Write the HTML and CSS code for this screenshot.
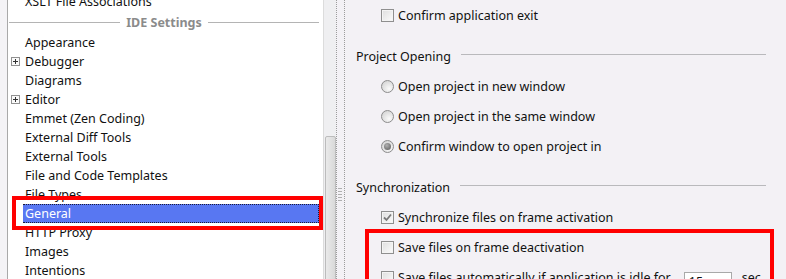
FILE: index.html
```html
<!DOCTYPE html>
<html lang="en">
<head>
    <meta charset="UTF-8">
    <title>Settings</title>
    <link rel="stylesheet" href="styles.css">
</head>
<body>

<div class="window">
    <div class="gutter"></div>

    <div class="tree">
        <div class="row cut"><span class="toggle"></span><span class="label">XSLT File Associations</span></div>
        <div class="group"><span class="group-title">IDE Settings</span></div>
        <div class="row"><span class="toggle"></span><span class="label">Appearance</span></div>
        <div class="row"><span class="toggle plus"></span><span class="label">Debugger</span></div>
        <div class="row"><span class="toggle"></span><span class="label">Diagrams</span></div>
        <div class="row"><span class="toggle plus"></span><span class="label">Editor</span></div>
        <div class="row"><span class="toggle"></span><span class="label">Emmet (Zen Coding)</span></div>
        <div class="row"><span class="toggle"></span><span class="label">External Diff Tools</span></div>
        <div class="row"><span class="toggle"></span><span class="label">External Tools</span></div>
        <div class="row"><span class="toggle"></span><span class="label">File and Code Templates</span></div>
        <div class="row"><span class="toggle"></span><span class="label">File Types</span></div>
        <div class="row selected"><span class="toggle"></span><span class="label">General</span></div>
        <div class="row"><span class="toggle"></span><span class="label">HTTP Proxy</span></div>
        <div class="row"><span class="toggle"></span><span class="label">Images</span></div>
        <div class="row"><span class="toggle"></span><span class="label">Intentions</span></div>
    </div>

    <div class="scrollbar"><div class="thumb"></div></div>

    <div class="splitter"><div class="grip"></div></div>

    <div class="settings">
        <div class="option">
            <span class="check"></span>Confirm application exit
        </div>

        <div class="section"><span>Project Opening</span><span class="rule"></span></div>
        <div class="option"><span class="radio"></span>Open project in new window</div>
        <div class="option"><span class="radio"></span>Open project in the same window</div>
        <div class="option"><span class="radio on"></span>Confirm window to open project in</div>

        <div class="section"><span>Synchronization</span><span class="rule"></span></div>
        <div class="option">
            <span class="check on">
                <svg width="9" height="9" viewBox="0 0 9 9"><path d="M1 4.5 L3.5 7 L8 1.5" fill="none" stroke="#7a7a7a" stroke-width="1.8"/></svg>
            </span>Synchronize files on frame activation
        </div>
        <div class="option"><span class="check"></span>Save files on frame deactivation</div>
        <div class="option">
            <span class="check"></span>Save files automatically if application is idle for
            <span class="field">15</span>
            <span class="unit">sec</span>
        </div>
    </div>

    <!-- annotation boxes drawn over the dialog -->
    <div class="mark mark-tree"></div>
    <div class="mark mark-sync"></div>
</div>

</body>
</html>
```

FILE: styles.css
```css
body {
    margin: 0;
    font-family: "Noto Sans", "Open Sans", sans-serif;
    font-size: 12.5px;
    color: #111;
    background-color: #f3f1f5;
    overflow: hidden;
}
.window {
    position: relative;
    display: flex;
    width: 786px;
    height: 279px;
    overflow: hidden;
}
.gutter {
    flex: none;
    width: 7px;
    background-color: #f4f3f6;
    border-right: 1px solid #a9a9a9;
}
.tree {
    flex: none;
    width: 315px;
    background-color: #fff;
}
.row {
    display: flex;
    align-items: center;
    height: 19px;
    padding-left: 3px;
    white-space: nowrap;
}
.row.cut {
    margin-top: -8px;
}
.toggle {
    width: 9px;
    height: 9px;
    margin-right: 3px;
    flex: none;
    box-sizing: border-box;
    position: relative;
}
.toggle.plus {
    border: 1px solid #919191;
    background-color: #fafafa;
}
.toggle.plus::before,
.toggle.plus::after {
    content: "";
    position: absolute;
    background-color: #333;
}
.toggle.plus::before {
    left: 1px;
    top: 3px;
    width: 5px;
    height: 1px;
}
.toggle.plus::after {
    left: 3px;
    top: 1px;
    width: 1px;
    height: 5px;
}
.label {
    padding-left: 2px;
    line-height: 17px;
}
.row.selected .label {
    flex: 1;
    margin-right: 4px;
    background-color: #5877f2;
    color: #fff;
    border-top: 1px dotted #1b1b3a;
    border-bottom: 1px dotted #1b1b3a;
    border-right: 1px dotted #1b1b3a;
}
.group {
    display: flex;
    align-items: center;
    height: 22px;
    padding: 0 4px 0 1px;
    gap: 6px;
}
.group::before,
.group::after {
    content: "";
    flex: 1;
    height: 1px;
    background-color: #b4b4b4;
}
.group-title {
    font-weight: bold;
    color: #8b8b8b;
}
.scrollbar {
    flex: none;
    position: relative;
    width: 12px;
    border-left: 1px solid #dcdcdc;
    background-color: #efeff1;
}
.thumb {
    position: absolute;
    left: 1px;
    right: 0;
    top: 136px;
    bottom: -4px;
    border: 1px solid #bcbcbc;
    border-radius: 2px 2px 0 0;
    background: linear-gradient(to right, #eaeaea, #d9d9d9);
}
.splitter {
    flex: none;
    position: relative;
    width: 7px;
    border-left: 1px dotted #9c9c9c;
    border-right: 1px dotted #9c9c9c;
}
.grip {
    position: absolute;
    left: 1px;
    top: 187px;
    width: 4px;
    height: 14px;
    background-image: radial-gradient(circle, #b0b0b0 0.8px, transparent 1px);
    background-size: 2px 3px;
}
.settings {
    flex: 1;
    min-width: 0;
    padding-left: 11px;
    padding-right: 20px;
}
.option {
    display: flex;
    align-items: center;
    height: 30px;
    padding-left: 25px;
    white-space: nowrap;
}
.section {
    display: flex;
    align-items: center;
    height: 29px;
    margin-top: 12px;
}
.rule {
    flex: 1;
    height: 1px;
    margin-left: 10px;
    margin-bottom: 4px;
    background-color: #b9b9bc;
}
.check {
    flex: none;
    display: flex;
    align-items: center;
    justify-content: center;
    width: 13px;
    height: 13px;
    margin-right: 4px;
    box-sizing: border-box;
    border: 1px solid #8f8f8f;
    background: linear-gradient(135deg, #dedede, #fcfcfc);
    box-shadow: inset 0 0 0 1px #f4f4f4;
}
.radio {
    flex: none;
    width: 13px;
    height: 13px;
    margin-right: 4px;
    box-sizing: border-box;
    border-radius: 50%;
    border: 1px solid #8c8c8c;
    background: radial-gradient(circle at 65% 70%, #fafafa, #d6d6d6 80%);
    position: relative;
}
.radio.on::after {
    content: "";
    position: absolute;
    left: 2px;
    top: 2px;
    width: 7px;
    height: 7px;
    border-radius: 50%;
    background: radial-gradient(circle at 40% 35%, #b0b0b0, #595959);
}
.field {
    flex: none;
    width: 48px;
    height: 20px;
    margin-left: 13px;
    padding-left: 4px;
    box-sizing: border-box;
    border: 1px solid #a9a9a9;
    background-color: #fff;
    line-height: 18px;
    margin-top: 10px;
}
.unit {
    margin-left: 10px;
}
.mark {
    position: absolute;
    border: 4px solid #ff0000;
    box-sizing: border-box;
}
.mark-tree {
    left: 12px;
    top: 196px;
    width: 311px;
    height: 34px;
}
.mark-sync {
    left: 365px;
    top: 229px;
    width: 409px;
    height: 70px;
}
```
